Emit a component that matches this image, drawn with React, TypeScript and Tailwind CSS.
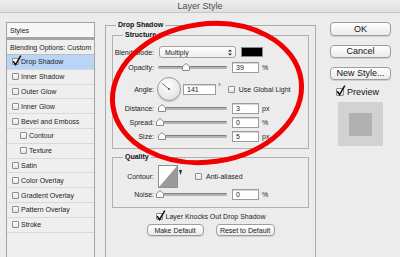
import React from "react";

function Check({ checked = false, size = 6 }: { checked?: boolean; size?: number }) {
  return (
    <div
      className={`relative shrink-0 rounded-[1px] border border-[#8c8c8c] bg-gradient-to-b from-white to-[#e4e4e4] ${
        size === 8 ? "w-[8px] h-[8px]" : size === 7 ? "w-[7px] h-[7px]" : "w-[6px] h-[6px]"
      }`}
    >
      {checked && (
        <svg className="absolute left-[-1px] top-[-4px]" width="10" height="11" viewBox="0 0 10 11">
          <path d="M1.2 6.2 L3.6 9.6 L8.8 0.6" stroke="#111" strokeWidth="1.5" fill="none" />
        </svg>
      )}
    </div>
  );
}

function Item({
  label,
  sub = false,
  selected = false,
  checked = false,
}: {
  label: string;
  sub?: boolean;
  selected?: boolean;
  checked?: boolean;
}) {
  return (
    <div
      className={`h-[14.8px] flex items-center border-b border-[#d8d8d8] ${
        selected ? "bg-[#b8d4f7]" : ""
      } ${sub ? "pl-[13px]" : "pl-[5px]"}`}
    >
      <Check checked={checked} size={7} />
      <span className="ml-[2px] whitespace-nowrap">{label}</span>
    </div>
  );
}

function Slider({ pos }: { pos: number }) {
  return (
    <div className="relative w-[69px] h-[10px] flex items-center">
      <div className="w-full h-[3px] rounded-full bg-[#b3b3b3] border-t border-[#7f7f7f]" />
      <svg className="absolute top-[1px]" style={{ left: pos - 4 }} width="8" height="8" viewBox="0 0 8 8">
        <path d="M4 0.5 L7.5 3.5 L7.5 7.5 L0.5 7.5 L0.5 3.5 Z" fill="#fbfbfb" stroke="#8a8a8a" />
      </svg>
    </div>
  );
}

function Field({ value, wide = false }: { value: string; wide?: boolean }) {
  return (
    <div
      className={`h-[11px] ${wide ? "w-[33px]" : "w-[27px]"} border border-[#9c9c9c] bg-white pl-[3px] text-[7px] leading-[9px] shadow-[inset_0_1px_0_#d6d6d6]`}
    >
      {value}
    </div>
  );
}

function Label({ children }: { children: React.ReactNode }) {
  return <div className="w-[41px] text-right whitespace-nowrap">{children}</div>;
}

function SliderRow({ label, pos, value, unit, cls }: { label: string; pos: number; value: string; unit: string; cls: string }) {
  return (
    <div className={`flex items-center h-[12px] ${cls}`}>
      <Label>{label}</Label>
      <div className="ml-[4px]">
        <Slider pos={pos} />
      </div>
      <div className="ml-[5px]">
        <Field value={value} />
      </div>
      <span className="ml-[3px]">{unit}</span>
    </div>
  );
}

function Btn({ children, cls }: { children: React.ReactNode; cls: string }) {
  return (
    <div
      className={`flex items-center justify-center rounded-[4px] border border-[#9d9d9d] bg-gradient-to-b from-white to-[#ebebeb] shadow-[0_1px_0_#d0d0d0] ${cls}`}
    >
      {children}
    </div>
  );
}

export default function App() {
  return (
    <div className="relative w-[400px] h-[257px] overflow-hidden bg-[#ececec] text-[#1c1c1c] font-['Liberation_Sans',Arial,sans-serif]">
      {/* title bar */}
      <div className="h-[13px] flex items-center justify-center bg-gradient-to-b from-[#eeeeee] to-[#e0e0e0] border-b border-[#c6c6c6] text-[9px] text-[#4d4d4d] leading-none">
        Layer Style
      </div>

      <div className="flex items-start">
        {/* left list */}
        <div className="ml-[6px] mt-[9px] w-[89px] h-[260px] border border-[#a3a3a3] bg-[#efefef] text-[7px] leading-none">
          <div className="h-[14px] flex items-center pl-[3px] bg-[#f7f7f7]">Styles</div>
          <div className="h-[3px] bg-[#a6a6a6]" />
          <div className="h-[15px] flex items-center pl-[3px] border-b border-[#bdbdbd]">Blending Options: Custom</div>
          <Item label="Drop Shadow" selected checked />
          <Item label="Inner Shadow" />
          <Item label="Outer Glow" />
          <Item label="Inner Glow" />
          <Item label="Bevel and Emboss" />
          <Item label="Contour" sub />
          <Item label="Texture" sub />
          <Item label="Satin" />
          <Item label="Color Overlay" />
          <Item label="Gradient Overlay" />
          <Item label="Pattern Overlay" />
          <Item label="Stroke" />
        </div>

        {/* middle */}
        <fieldset className="ml-[10px] mt-[7px] w-[211px] h-[260px] border border-[#ababab] px-[6px] text-[7px] leading-none text-[#222]">
          <legend className="ml-[4px] px-[2px] h-[10px] leading-[10px] font-bold text-[7px] text-[#111]">Drop Shadow</legend>

          <fieldset className="border border-[#b0b0b0] pt-[6px] pb-[6px]">
            <legend className="ml-[10px] px-[2px] h-[10px] leading-[10px] font-bold text-[7px] text-[#111]">Structure</legend>

            <div className="flex items-center h-[12px]">
              <Label>Blend Mode:</Label>
              <div className="ml-[5px] w-[77px] h-[12px] rounded-[3px] border border-[#a2a2a2] bg-gradient-to-b from-white to-[#efefef] flex items-center justify-between pl-[5px] pr-[3px]">
                <span>Multiply</span>
                <svg width="4" height="7" viewBox="0 0 4 7">
                  <path d="M0 2.6 L2 0.4 L4 2.6 Z M0 4.4 L2 6.6 L4 4.4 Z" fill="#222" />
                </svg>
              </div>
              <div className="ml-[5px] w-[22px] h-[10px] bg-black border border-[#8a8a8a]" />
            </div>

            <SliderRow label="Opacity:" pos={28} value="39" unit="%" cls="mt-[3px]" />

            <div className="flex items-center h-[26px] mt-[3px]">
              <Label>Angle:</Label>
              <div className="ml-[3px] w-[24px] h-[24px] rounded-full border border-[#9a9a9a] bg-[radial-gradient(circle_at_45%_35%,#ffffff,#dadada)] shadow-[0_1px_1px_#c4c4c4]">
                <svg width="22" height="22" viewBox="0 0 22 22">
                  <line x1="11" y1="11" x2="4.2" y2="5.5" stroke="#555" strokeWidth="0.8" />
                  <circle cx="11" cy="11" r="0.9" fill="#444" />
                </svg>
              </div>
              <div className="ml-[2px]">
                <Field value="141" wide />
              </div>
              <span className="ml-[2px] self-start mt-[7px]">°</span>
              <div className="ml-[7px]">
                <Check size={7} />
              </div>
              <span className="ml-[4px] whitespace-nowrap">Use Global Light</span>
            </div>

            <SliderRow label="Distance:" pos={4} value="3" unit="px" cls="" />
            <SliderRow label="Spread:" pos={1.5} value="0" unit="%" cls="mt-[2px]" />
            <SliderRow label="Size:" pos={4} value="5" unit="px" cls="mt-[2px]" />
          </fieldset>

          <fieldset className="mt-[3px] border border-[#b0b0b0] pb-[7px]">
            <legend className="ml-[10px] px-[2px] h-[10px] leading-[10px] font-bold text-[7px] text-[#111]">Quality</legend>
            <div className="flex items-center h-[23px] mt-[3px]">
              <Label>Contour:</Label>
              <div className="ml-[4px] w-[20px] h-[23px] border border-[#8f8f8f] bg-white">
                <svg width="18" height="21" viewBox="0 0 18 21">
                  <path d="M0 21 L18 0 L18 21 Z" fill="#9b9b9b" />
                </svg>
              </div>
              <svg className="ml-[1px] self-start mt-[5px]" width="3" height="6" viewBox="0 0 3 6">
                <path d="M0 0 L3 0 L1.5 5 Z" fill="#222" />
              </svg>
              <div className="ml-[13px]">
                <Check size={7} />
              </div>
              <span className="ml-[4px] whitespace-nowrap">Anti-aliased</span>
            </div>
            <SliderRow label="Noise:" pos={1.5} value="0" unit="%" cls="" />
          </fieldset>

          <div className="mt-[3px] h-[10px] flex items-center justify-center">
            <Check checked size={7} />
            <span className="ml-[3px] whitespace-nowrap">Layer Knocks Out Drop Shadow</span>
          </div>

          <div className="mt-[3px] flex justify-center gap-[12px]">
            <Btn cls="w-[57px] h-[12px]">Make Default</Btn>
            <Btn cls="w-[59px] h-[12px]">Reset to Default</Btn>
          </div>
        </fieldset>

        {/* right column */}
        <div className="ml-[14px] mt-[9px] w-[61px] flex flex-col text-[9px] leading-none text-[#111]">
          <Btn cls="h-[14px]">OK</Btn>
          <Btn cls="mt-[9px] h-[13px]">Cancel</Btn>
          <Btn cls="mt-[9px] h-[13px]">New Style...</Btn>
          <div className="mt-[7px] h-[10px] flex items-center pl-[6px]">
            <Check checked size={8} />
            <span className="ml-[3px]">Preview</span>
          </div>
          <div className="mt-[5px] ml-[8px] w-[45px] h-[44px] bg-[#d2d2d2] flex items-center justify-center">
            <div className="w-[23px] h-[23px] bg-[#b1b1b1]" />
          </div>
        </div>
      </div>

      {/* red annotation ellipse */}
      <svg className="absolute left-0 top-0 pointer-events-none" width="400" height="257" viewBox="0 0 400 257">
        <ellipse cx="207" cy="93" rx="95" ry="69" transform="rotate(-8 207 93)" fill="none" stroke="#f00000" strokeWidth="5" />
      </svg>
    </div>
  );
}
